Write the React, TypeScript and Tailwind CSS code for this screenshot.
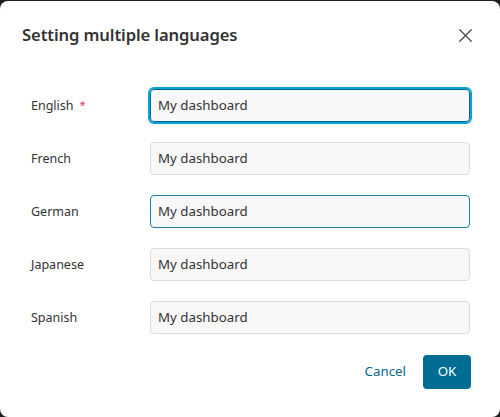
import { X } from "lucide-react";

const languages = [
  { name: "English", required: true, state: "focus" },
  { name: "French", required: false, state: "idle" },
  { name: "German", required: false, state: "hover" },
  { name: "Japanese", required: false, state: "idle" },
  { name: "Spanish", required: false, state: "idle" },
];

const App = () => {
  return (
    <div className="w-[500px] h-[417px] bg-[#1e1e1e] pt-px" style={{ fontFamily: '"Noto Sans", "Open Sans", sans-serif' }}>
      <div className="h-full bg-white rounded-[8px] flex flex-col">
        {/* Header */}
        <div className="flex items-center justify-between pl-[22px] pr-[23px] h-[68px]">
          <h1 className="text-[16.6px] font-semibold text-[#333] tracking-[-0.1px]">Setting multiple languages</h1>
          <X className="h-[23px] w-[23px] text-[#444]" strokeWidth={1.3} />
        </div>

        {/* Fields */}
        <div className="flex flex-col gap-[20px] pt-[20px] pl-[31px] pr-[30px]">
          {languages.map(lang => (
            <div key={lang.name} className="flex items-center h-[33px]">
              <label className="w-[119px] text-[12.5px] text-[#333] pt-[2px]">
                {lang.name}
                {lang.required && <span className="text-[#e8336a] ml-[6px] text-[11px] align-top">*</span>}
              </label>
              <div
                className={
                  lang.state === "focus"
                    ? "flex-1 h-[33px] rounded-[4px] border border-[#00678a] bg-[#f8f8f8] outline-[2px] outline-solid outline-[#0ba2d8] flex items-center px-[7px]"
                    : lang.state === "hover"
                    ? "flex-1 h-[33px] rounded-[4px] border border-[#1a7ea0] bg-[#f8f8f8] flex items-center px-[7px]"
                    : "flex-1 h-[33px] rounded-[4px] border border-[#dcdcdc] bg-[#f8f8f8] flex items-center px-[7px]"
                }
              >
                <span className="text-[13.3px] text-[#333]">My dashboard</span>
              </div>
            </div>
          ))}
        </div>

        {/* Footer */}
        <div className="flex items-center justify-end gap-[15px] pr-[29px] mt-[21px]">
          <button className="text-[13.3px] text-[#00698f] px-[2px]">Cancel</button>
          <button className="h-[34px] w-[48px] rounded-[4px] bg-[#006e94] text-white text-[13.3px]">OK</button>
        </div>
      </div>
    </div>
  );
};

export default App;
